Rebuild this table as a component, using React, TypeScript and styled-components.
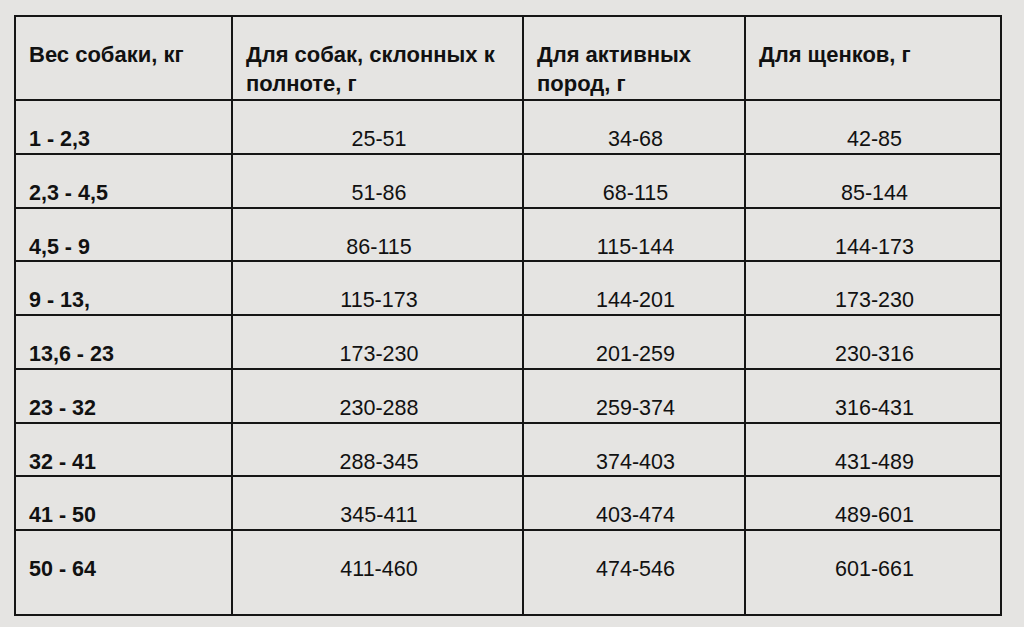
import React from 'react'
import styled, { createGlobalStyle } from 'styled-components'

const GlobalStyle = createGlobalStyle`
  html, body {
    margin: 0;
    padding: 0;
    background: #e5e4e2;
  }
  body {
    font-family: "Liberation Sans", Arial, sans-serif;
    color: #111;
  }
`

const Page = styled.div`
  padding: 15px 0 0 14px;
  min-height: 627px;
  box-sizing: border-box;
`

const Table = styled.table`
  width: 986px;
  table-layout: fixed;
  border-collapse: collapse;
  font-size: 21.5px;
`

const HeadCell = styled.th`
  border: 2px solid #151515;
  height: 84px;
  box-sizing: border-box;
  padding: 23px 10px 0 13px;
  vertical-align: top;
  text-align: left;
  font-size: 22px;
  line-height: 29.4px;
  font-weight: 700;
`

const Cell = styled.td<{ $first?: boolean; $tall?: boolean }>`
  border: 2px solid #151515;
  height: ${(p) => (p.$tall ? '85px' : '53.75px')};
  box-sizing: border-box;
  padding: 26px 10px 0 13px;
  vertical-align: top;
  line-height: 25px;
  text-align: ${(p) => (p.$first ? 'left' : 'center')};
  font-weight: ${(p) => (p.$first ? 700 : 400)};
`

const headers = [
  'Вес собаки, кг',
  'Для собак, склонных к полноте, г',
  'Для активных пород, г',
  'Для щенков, г',
]

const widths = [217, 291, 222, 256]

const rows = [
  ['1 - 2,3', '25-51', '34-68', '42-85'],
  ['2,3 - 4,5', '51-86', '68-115', '85-144'],
  ['4,5 - 9', '86-115', '115-144', '144-173'],
  ['9 - 13,', '115-173', '144-201', '173-230'],
  ['13,6 - 23', '173-230', '201-259', '230-316'],
  ['23 - 32', '230-288', '259-374', '316-431'],
  ['32 - 41', '288-345', '374-403', '431-489'],
  ['41 - 50', '345-411', '403-474', '489-601'],
  ['50 - 64', '411-460', '474-546', '601-661'],
]

export default function App() {
  return (
    <>
      <GlobalStyle />
      <Page>
        <Table>
          <colgroup>
            {widths.map((w, i) => (
              <col key={i} style={{ width: w }} />
            ))}
          </colgroup>
          <thead>
            <tr>
              {headers.map((h) => (
                <HeadCell key={h}>{h}</HeadCell>
              ))}
            </tr>
          </thead>
          <tbody>
            {rows.map((r, ri) => (
              <tr key={ri}>
                {r.map((v, ci) => (
                  <Cell key={ci} $first={ci === 0} $tall={ri === rows.length - 1}>
                    {v}
                  </Cell>
                ))}
              </tr>
            ))}
          </tbody>
        </Table>
      </Page>
    </>
  )
}
